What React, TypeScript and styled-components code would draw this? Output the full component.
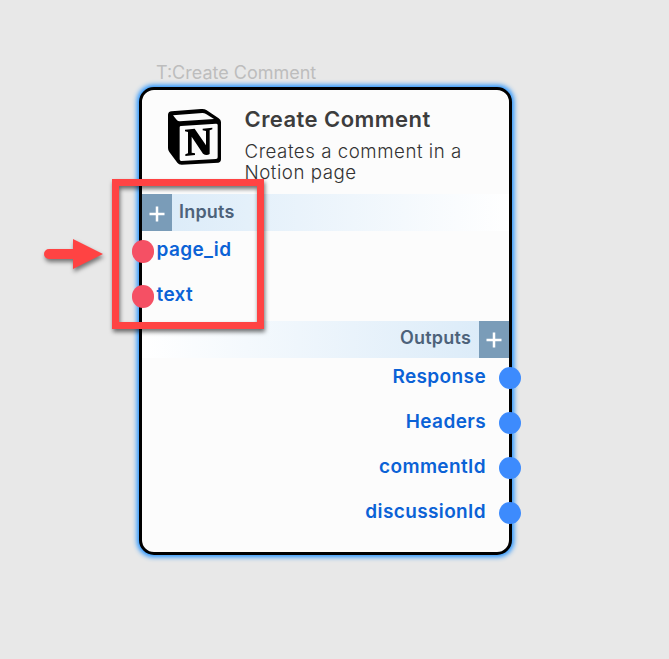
import React from "react";
import styled, { createGlobalStyle } from "styled-components";

const GlobalStyle = createGlobalStyle`
  body { margin: 0; background: #e8e8e8; }
  * { box-sizing: border-box; }
`;

const Canvas = styled.main`
  position: relative;
  width: 669px;
  height: 659px;
  overflow: hidden;
  background: #e8e8e8;
  font-family: Inter, "Liberation Sans", sans-serif;
`;

const Node = styled.section`
  position: absolute;
  left: 139px;
  top: 62px;
  width: 373px;
`;

const NodeLabel = styled.div`
  height: 24px;
  padding-left: 17px;
  font-size: 18px;
  line-height: 22px;
  color: #bdbdbd;
  white-space: nowrap;
`;

const Card = styled.div`
  height: 468px;
  margin-top: 0.5px;
  border: 3px solid #000;
  border-radius: 15px;
  background: #fcfcfc;
  box-shadow: 0 0 5px 1.5px #1e90ff;
`;

const Header = styled.header`
  display: flex;
  height: 104.5px;
  padding: 10px 0 0 13px;
`;

const HeaderText = styled.div`
  padding: 5px 0 0 9.5px;
  white-space: nowrap;
`;

const Title = styled.h1`
  margin: 0;
  font-size: 22px;
  line-height: 28px;
  font-weight: 600;
  letter-spacing: 0.45px;
  color: #3d3d3d;
`;

const Description = styled.p`
  margin: 8px 0 0;
  font-size: 18.7px;
  line-height: 21px;
  font-weight: 300;
  letter-spacing: 0.53px;
  color: #333;
`;

const SectionBar = styled.div<{ $side: "left" | "right" }>`
  display: flex;
  flex-direction: ${(p) => (p.$side === "left" ? "row" : "row-reverse")};
  height: 37px;
  background: linear-gradient(to ${(p) => (p.$side === "left" ? "right" : "left")}, #d9eaf8, #fff);
`;

const AddButton = styled.button`
  display: flex;
  align-items: center;
  justify-content: center;
  width: 30px;
  height: 37px;
  padding: 2px 1px 0 0;
  border: 0;
  background: #7a9cb8;
`;

const SectionTitle = styled.h2<{ $lineHeight: number }>`
  margin: 0;
  padding: 0 8px 0 7px;
  font-size: 18px;
  line-height: ${(p) => p.$lineHeight}px;
  font-weight: 600;
  letter-spacing: 0.2px;
  color: #4d627a;
`;

const PortList = styled.div<{ $height: number }>`
  height: ${(p) => p.$height}px;
`;

const PortRow = styled.div<{ $side: "left" | "right" }>`
  display: flex;
  flex-direction: ${(p) => (p.$side === "left" ? "row" : "row-reverse")};
  align-items: flex-start;
  gap: ${(p) => (p.$side === "left" ? 2.5 : 12.5)}px;
  height: 45px;
  padding-top: 9px;
  margin: 0 -12px 0 -10.5px;
`;

const Pin = styled.span<{ $color: string }>`
  width: 22.5px;
  height: 22.5px;
  border-radius: 50%;
  background: ${(p) => p.$color};
`;

const PortName = styled.span`
  font-size: 19px;
  line-height: 20px;
  font-weight: 600;
  letter-spacing: 0.38px;
  color: #0b62d6;
`;

const Highlight = styled.div`
  position: absolute;
  left: 112px;
  top: 179px;
  width: 152px;
  height: 150px;
  border: 7px solid #ff4343;
  filter: drop-shadow(1px 3px 2px rgba(0, 0, 0, 0.55));
`;

const Arrow = styled.svg`
  position: absolute;
  left: 35px;
  top: 230px;
  filter: drop-shadow(1px 3px 2px rgba(0, 0, 0, 0.5));
`;

const Plus = () => (
  <svg width="16" height="16" viewBox="0 0 16 16">
    <path d="M8 .5v15M.5 8h15" stroke="#fff" strokeWidth="2.5" />
  </svg>
);

const NotionLogo = () => (
  <svg width="80" height="75" viewBox="0 0 240 225">
    <path d="M50 34L138 27Q148 26 154 30L191 55Q198 60 198 66V178Q198 187 190 188L80 194Q71 194 67 188L43 156Q39 151 39 144V45Q39 35 50 34Z" />
    <path d="M54 46L142 39Q148 39 153 42L177 57L74 64Q69 64 66 61Z" fill="#fcfcfc" />
    <path d="M78 78L183 71Q188 71 188 75V172Q188 177 183 177L79 183Q74 183 74 178V82Q74 78 78 78Z" fill="#fcfcfc" />
    <path d="M90 89L119 86L153 136V93L143 91V86L172 83V88L164 91V162Q154 168 144 161L110 110V158L120 160V165L91 168V163L99 160V96L90 94Z" />
  </svg>
);

const inputs = ["page_id", "text"];
const outputs = ["Response", "Headers", "commentId", "discussionId"];

export default function App() {
  return (
    <Canvas>
      <GlobalStyle />
      <Node>
        <NodeLabel>T:Create Comment</NodeLabel>
        <Card>
          <Header>
            <NotionLogo />
            <HeaderText>
              <Title>Create Comment</Title>
              <Description>
                Creates a comment in a<br />
                Notion page
              </Description>
            </HeaderText>
          </Header>
          <SectionBar $side="left">
            <AddButton aria-label="Add input"><Plus /></AddButton>
            <SectionTitle $lineHeight={35}>Inputs</SectionTitle>
          </SectionBar>
          <PortList $height={89.5}>
            {inputs.map((name) => (
              <PortRow key={name} $side="left">
                <Pin $color="#f55064" />
                <PortName>{name}</PortName>
              </PortRow>
            ))}
          </PortList>
          <SectionBar $side="right">
            <AddButton aria-label="Add output"><Plus /></AddButton>
            <SectionTitle $lineHeight={34}>Outputs</SectionTitle>
          </SectionBar>
          <PortList $height={180}>
            {outputs.map((name) => (
              <PortRow key={name} $side="right">
                <Pin $color="#3d8bfd" />
                <PortName>{name}</PortName>
              </PortRow>
            ))}
          </PortList>
        </Card>
      </Node>
      <Highlight />
      <Arrow width="76" height="50" viewBox="0 0 76 50">
        <path d="M14 19H38V9L68 24L38 39V29H14A5 5 0 0 1 14 19Z" fill="#ff4343" />
      </Arrow>
    </Canvas>
  );
}
